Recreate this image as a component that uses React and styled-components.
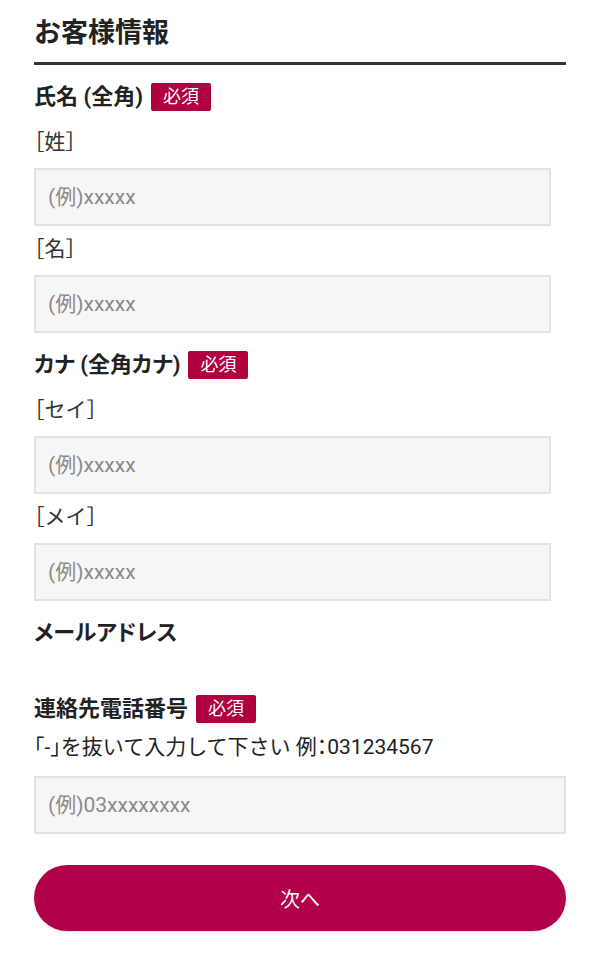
import React from "react";
import styled, { createGlobalStyle } from "styled-components";

const Global = createGlobalStyle`
  html, body { margin: 0; padding: 0; background: #fff; }
  body {
    font-family: Roboto, "Noto Sans CJK JP", "Noto Sans", sans-serif;
    color: #222;
  }
  * { box-sizing: border-box; }
`;

const Page = styled.form`
  padding: 14px 34px 28px;
  display: flex;
  flex-direction: column;
`;

const Title = styled.h2`
  margin: 0;
  font-size: 27px;
  line-height: 39px;
  font-weight: 700;
  color: #222;
  padding-bottom: 9px;
  border-bottom: 3px solid #333;
`;

const Group = styled.div`
  display: flex;
  flex-direction: column;
  margin-top: 17px;
  padding-bottom: ${(p) => p.$tail || 0}px;
`;

const LabelRow = styled.div`
  display: flex;
  align-items: center;
  gap: 8px;
  height: 30px;
`;

const Label = styled.span`
  font-size: 22px;
  font-weight: 700;
  line-height: 30px;
  color: #222;
  font-feature-settings: "palt";
`;

const Badge = styled.span`
  display: inline-flex;
  align-items: center;
  justify-content: center;
  width: 60px;
  height: 28px;
  border-radius: 2px;
  background: #b0003f;
  color: #fff;
  font-size: 18px;
  line-height: 1;
`;

const SubLabel = styled.div`
  font-size: 21px;
  line-height: 30px;
  color: #333;
  font-feature-settings: "halt";
  margin-top: ${(p) => p.$top}px;
`;

const Hint = styled.div`
  font-size: 21px;
  line-height: 30px;
  color: #222;
  font-feature-settings: "halt";
  margin-top: 8px;
`;

const Input = styled.input`
  display: block;
  width: ${(p) => (p.$full ? "100%" : "517px")};
  height: 58px;
  margin-top: ${(p) => p.$top || 11}px;
  padding: 0 12px;
  background: #f6f6f6;
  border: 2px solid #e3e3e3;
  border-radius: 0;
  font-family: Roboto, "Noto Sans CJK JP", sans-serif;
  font-size: 21px;
  color: #333;
  outline: none;
  &::placeholder { color: #8a8a8a; }
`;

const Submit = styled.button`
  margin-top: 31px;
  height: 66px;
  width: 100%;
  border: none;
  border-radius: 33px;
  background: #b3004a;
  color: #fff;
  font-family: Roboto, "Noto Sans CJK JP", sans-serif;
  font-size: 20px;
  box-shadow: 0 1px 3px rgba(0, 0, 0, 0.12);
  cursor: pointer;
`;

const Field = ({ sub, first }) => (
  <>
    <SubLabel $top={first ? 15 : 8}>{sub}</SubLabel>
    <Input placeholder="(例)xxxxx" />
  </>
);

export default function App() {
  return (
    <>
      <Global />
      <Page onSubmit={(e) => e.preventDefault()}>
        <Title>お客様情報</Title>

        <Group>
          <LabelRow>
            <Label>氏名 (全角)</Label>
            <Badge>必須</Badge>
          </LabelRow>
          <Field sub="［姓］" first />
          <Field sub="［名］" />
        </Group>

        <Group>
          <LabelRow>
            <Label>カナ (全角カナ)</Label>
            <Badge>必須</Badge>
          </LabelRow>
          <Field sub="［セイ］" first />
          <Field sub="［メイ］" />
        </Group>

        <Group $tail={29}>
          <LabelRow>
            <Label>メールアドレス</Label>
          </LabelRow>
        </Group>

        <Group>
          <LabelRow>
            <Label>連絡先電話番号</Label>
            <Badge>必須</Badge>
          </LabelRow>
          <Hint>「-」を抜いて入力して下さい 例：031234567</Hint>
          <Input $full $top={14} placeholder="(例)03xxxxxxxx" />
        </Group>

        <Submit type="submit">次へ</Submit>
      </Page>
    </>
  );
}
